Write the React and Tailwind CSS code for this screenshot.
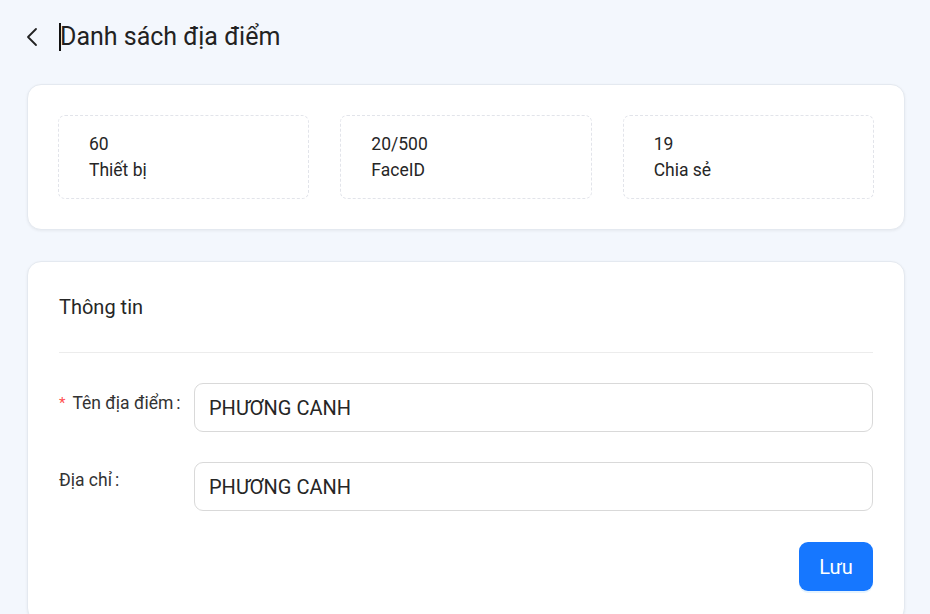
import React from "react";

export default function App() {
  return (
    <div className="w-full bg-[#f3f7fd] font-['Roboto',sans-serif] text-[#1f1f1f] overflow-hidden h-[614px]">
      <div className="flex items-center h-[74px] pl-[25px]">
        <svg width="16" height="22" viewBox="0 0 16 22" className="text-[#222]">
          <path d="M11 3 L3 11 L11 19" fill="none" stroke="currentColor" strokeWidth="1.8" strokeLinecap="round" strokeLinejoin="round" />
        </svg>
        <div className="ml-[18px] w-[2px] h-[28px] bg-[#111]" />
        <div className="text-[25px] leading-[30px] text-[#222] -ml-[1px]">Danh sách địa điểm</div>
      </div>

      <div className="ml-[27px] mr-[25px] mt-[10px] bg-white rounded-[14px] border border-[#e4e9f0] shadow-[0_1px_3px_rgba(0,0,0,0.06)] px-[30px] py-[30px] grid grid-cols-3 gap-[31px]">
        {[
          ["60", "Thiết bị"],
          ["20/500", "FaceID"],
          ["19", "Chia sẻ"],
        ].map(([a, b]) => (
          <div key={b} className="border border-dashed border-[#e2e4ea] rounded-[7px] px-[30px] py-[15px] text-[17.5px] leading-[26px] text-[#262626]">
            <div>{a}</div>
            <div>{b}</div>
          </div>
        ))}
      </div>

      <div className="ml-[27px] mr-[25px] mt-[31px] bg-white rounded-[14px] border border-[#e4e9f0] shadow-[0_1px_3px_rgba(0,0,0,0.06)] px-[31px] pb-[30px]">
        <div className="h-[91px] flex items-center border-b border-[#ececec] text-[20px] text-[#262626]">Thông tin</div>
        <div className="flex items-center mt-[30px]">
          <div className="w-[135px] shrink-0 text-[17.5px] text-[#333] -mt-[8px] flex items-center">
            <span className="text-[#ff4d4f] mr-[7px] text-[15px]">*</span>
            <span>Tên địa điểm</span>
            <span className="ml-[3px]">:</span>
          </div>
          <div className="flex-1 h-[49px] border border-[#d9d9d9] rounded-[9px] flex items-center px-[14px] text-[20px] text-[#262626]">PHƯƠNG CANH</div>
        </div>
        <div className="flex items-center mt-[30px]">
          <div className="w-[135px] shrink-0 text-[17.5px] text-[#333] -mt-[12px]">
            <span>Địa chỉ</span>
            <span className="ml-[3px]">:</span>
          </div>
          <div className="flex-1 h-[49px] border border-[#d9d9d9] rounded-[9px] flex items-center px-[14px] text-[20px] text-[#262626]">PHƯƠNG CANH</div>
        </div>
        <div className="flex justify-end mt-[31px]">
          <button className="w-[74px] h-[49px] rounded-[9px] bg-[#1677ff] text-white text-[20px] shadow-[0_2px_0_rgba(5,145,255,0.1)]">Lưu</button>
        </div>
      </div>
    </div>
  );
}
